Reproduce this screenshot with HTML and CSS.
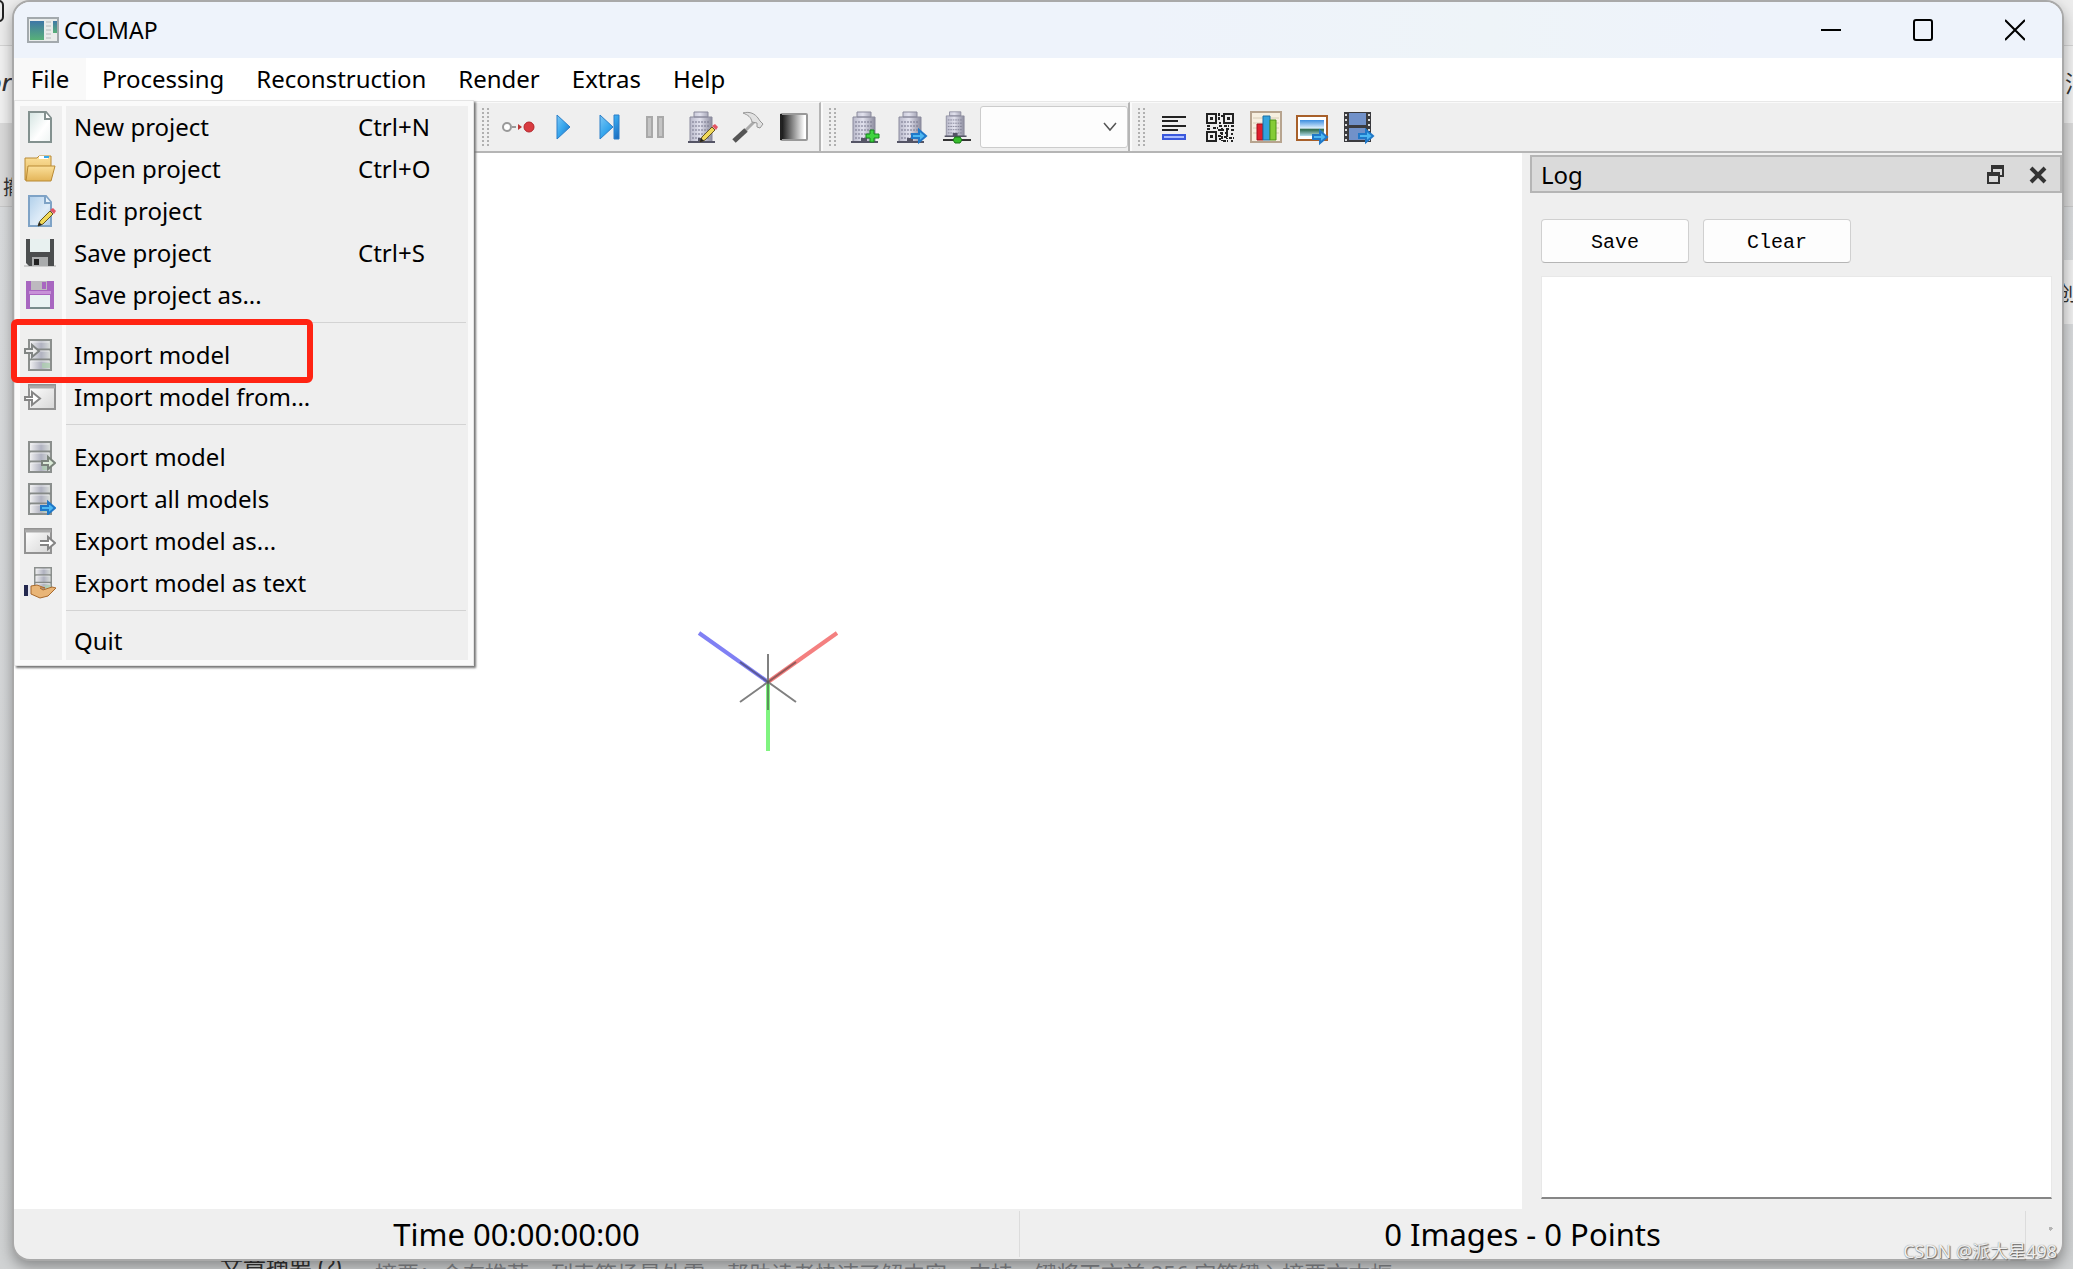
FILE: index.html
```html
<!DOCTYPE html>
<html lang="en">
<head>
<meta charset="utf-8">
<title>COLMAP</title>
<link rel="stylesheet" href="styles.css">
</head>
<body>
<svg class="defs" aria-hidden="true">
  <defs>
    <linearGradient id="paper" x1="0" y1="0" x2="1" y2="1"><stop offset="0" stop-color="#d3e4e1"/><stop offset=".6" stop-color="#fff"/><stop offset="1" stop-color="#edf3f2"/></linearGradient>
    <linearGradient id="bluepaper" x1="0" y1="0" x2="1" y2="1"><stop offset="0" stop-color="#b0cfea"/><stop offset=".6" stop-color="#dfecf8"/><stop offset="1" stop-color="#a9c8e6"/></linearGradient>
    <linearGradient id="gold" x1="0" y1="0" x2="0" y2="1"><stop offset="0" stop-color="#fbe09a"/><stop offset="1" stop-color="#e3b458"/></linearGradient>
    <linearGradient id="metal" x1="0" y1="0" x2="1" y2="0"><stop offset="0" stop-color="#f4f4f4"/><stop offset=".55" stop-color="#b0b2c0"/><stop offset="1" stop-color="#dde1dd"/></linearGradient>
    <linearGradient id="play" x1="0" y1="0" x2="1" y2="1"><stop offset="0" stop-color="#7cc7f5"/><stop offset=".5" stop-color="#35a5ec"/><stop offset="1" stop-color="#1a68bb"/></linearGradient>
    <linearGradient id="fade" x1="0" y1="0" x2="1" y2="0"><stop offset="0" stop-color="#111"/><stop offset=".9" stop-color="#fff"/></linearGradient>
    <linearGradient id="wall" x1="0" y1="0" x2="1" y2="0"><stop offset="0" stop-color="#b9b9ca"/><stop offset=".45" stop-color="#e2e2ee"/><stop offset="1" stop-color="#8c8c9e"/></linearGradient>
    <linearGradient id="pane" x1="0" y1="0" x2="1" y2="1"><stop offset="0" stop-color="#fff"/><stop offset="1" stop-color="#d6d6d6"/></linearGradient>
    <linearGradient id="sky" x1="0" y1="0" x2="0" y2="1"><stop offset="0" stop-color="#3b8de0"/><stop offset=".5" stop-color="#dceefb"/><stop offset=".6" stop-color="#2d6a4a"/><stop offset="1" stop-color="#b7dfee"/></linearGradient>
    <linearGradient id="screen" x1="0" y1="0" x2="0" y2="1"><stop offset="0" stop-color="#3e77a6"/><stop offset="1" stop-color="#58b078"/></linearGradient>
    <g id="arrow"><path d="M17 23h7v-4l7 6-7 6v-4h-7z" fill="#4db8f2" stroke="#1f78c8" stroke-width="2"/></g>
    <g id="pencil"><path d="M14 31l2-5 10-10 3 3-10 10z" fill="#f0d95a" stroke="#665520"/><path d="M26 15l3-2 3 3-2 3z" fill="#e25563"/><path d="M14 31l1-4 3 3z" fill="#222"/></g>
    <symbol id="server" viewBox="0 0 32 32"><path d="M5 1h22v30H5z" fill="url(#metal)" stroke="#8b8f8d" stroke-width="2"/><path d="M5 10.500h22M5 20.500h22" stroke="#858987" stroke-width="2"/><path d="M7 12h18M7 22h18M7 3h18" stroke="#fff" stroke-opacity=".6"/><path d="M18 24h8v5h-8z" fill="#aacdac" opacity=".7"/></symbol>
    <symbol id="building" viewBox="0 0 32 32"><path d="M8 1h14v5H8zM4 6h22v25H4z" fill="url(#wall)" stroke="#8a8a9c"/><path d="M6 11h18M6 15h18M6 19h18M6 23h18M6 27h18" stroke="#77778c" stroke-dasharray="2 1"/><path d="M2 31h27M13 28h4v3h-4z" stroke="#555566" fill="#555566" stroke-width="2"/></symbol>
  </defs>
</svg>

<div class="backdrop" aria-hidden="true">
  <div class="band band-tabs"></div>
  <div class="band band-header"></div>
  <div class="band band-tools"></div>
  <div class="band band-page"></div>
  <span class="peek peek-url">https://mp.csdn.net/mp_blog/creation/editor/128281403340</span>
  <span class="peek peek-tab"></span>
  <span class="peek peek-or">or</span>
  <span class="peek peek-undo">撤</span>
  <span class="peek peek-msg">消</span>
  <span class="peek peek-card"></span>
  <span class="peek peek-create">创</span>
  <span class="peek peek-label">文章摘要 (?)</span>
  <span class="peek peek-summary">摘要：会在推荐、列表等场景外露，帮助读者快速了解内容，支持一键将正文前 256 字符键入摘要文本框</span>
</div>

<div class="window">
  <header class="titlebar">
    <svg class="app-icon" viewBox="0 0 32 26"><path d="M1 1h30v24H1z" fill="#e9eceb" stroke="#a3a9ad" stroke-width="2"/><path d="M3 4h14v19H3z" fill="url(#screen)"/><path d="M26 4h4v12h-4z" fill="url(#screen)"/><path d="M19 5h5M19 9h5M19 13h5M19 17h5M19 21h5" stroke="#b6baba"/></svg>
    <h1>COLMAP</h1>
    <div class="window-buttons">
      <button type="button" aria-label="Minimize"><svg viewBox="0 0 20 22"><path d="M0 11h20" stroke="#000" stroke-width="2"/></svg></button>
      <button type="button" aria-label="Maximize"><svg viewBox="0 0 20 22"><rect x="1" y="1" width="18" height="20" rx="2" fill="none" stroke="#000" stroke-width="2"/></svg></button>
      <button type="button" aria-label="Close"><svg viewBox="0 0 20 22"><path d="M0 1l20 20M20 1L0 21" stroke="#000" stroke-width="2"/></svg></button>
    </div>
  </header>

  <nav class="menubar">
    <div class="menu-holder">
      <button type="button" class="open">File</button>
      <div class="menu">
        <button type="button"><svg viewBox="0 0 32 32"><path d="M5 1h17l5 6v24H5z" fill="url(#paper)" stroke="#83918f" stroke-width="2"/><path d="M21 1v7h6" fill="#fff" stroke="#83918f" stroke-width="2"/></svg><span>New project</span><kbd>Ctrl+N</kbd></button>
        <button type="button"><svg viewBox="0 0 32 32"><path d="M1 5h12l2-2h12v24H1z" fill="url(#gold)" stroke="#b98a35"/><path d="M15 3h9v3h-9z" fill="#fff"/><path d="M20 3h5v2h-5z" fill="#36a9ea"/><path d="M4 13h27l-4 15H2z" fill="url(#gold)" stroke="#b98a35"/></svg><span>Open project</span><kbd>Ctrl+O</kbd></button>
        <button type="button"><svg viewBox="0 0 32 32"><path d="M5 1h17l5 6v24H5z" fill="url(#bluepaper)" stroke="#7fa3c6" stroke-width="2"/><path d="M21 1v7h6" fill="#e9f3fb" stroke="#7fa3c6" stroke-width="2"/><use href="#pencil"/></svg><span>Edit project</span></button>
        <button type="button"><svg viewBox="0 0 32 32"><path d="M0 28h32v2H0z" fill="#ccc"/><path d="M2 2h28v27H5l-3-3z" fill="#4b4d4e"/><path d="M6 2h20v13H6z" fill="#e8f1f0"/><path d="M8 20h16v9H8z" fill="#aaacad"/><path d="M10 22h5v6h-5z" fill="#222"/></svg><span>Save project</span><kbd>Ctrl+S</kbd></button>
        <button type="button"><svg viewBox="0 0 32 32"><path d="M2 2h28v28H2z" fill="#a866c0"/><path d="M5 12h22v3H5z" fill="#c792d8"/><path d="M6 16h20v13H6z" fill="#e9f3f2"/><path d="M7 2h16v9H7z" fill="#bdb9bf"/><path d="M18 3h4v7h-4z" fill="#a866c0"/><path d="M6 29h20" stroke="#788c8b" stroke-width="2"/></svg><span>Save project as...</span></button>
        <hr>
        <button type="button"><svg viewBox="0 0 32 32"><use href="#server"/><path d="M1 10h7V6l7 6-7 6v-4H1z" fill="#eee" stroke="#818584" stroke-width="2"/></svg><span>Import model</span></button>
        <button type="button"><svg viewBox="0 0 32 32"><path d="M5 4h26v24H5z" fill="url(#pane)" stroke="#929292" stroke-width="2"/><path d="M5 6h26" stroke="#aaa" stroke-width="3"/><path d="M1 16h7v-5l8 6.500-8 6.500v-5H1z" fill="#fff" stroke="#858585" stroke-width="2"/></svg><span>Import model from...</span></button>
        <hr>
        <button type="button"><svg viewBox="0 0 32 32"><use href="#server"/><path d="M18 20h6v-4l7 6-7 6v-4h-6z" fill="#dcebd8" stroke="#7a837a" stroke-width="2"/></svg><span>Export model</span></button>
        <button type="button"><svg viewBox="0 0 32 32"><use href="#server"/><use href="#arrow"/></svg><span>Export all models</span></button>
        <button type="button"><svg viewBox="0 0 32 32"><path d="M1 4h26v24H1z" fill="url(#pane)" stroke="#929292" stroke-width="2"/><path d="M1 6h26" stroke="#aaa" stroke-width="3"/><path d="M16 16h8v-4l7 6-7 6v-4h-8" fill="#fff" stroke="#858585" stroke-width="2"/></svg><span>Export model as...</span></button>
        <button type="button"><svg viewBox="0 0 32 32"><use href="#server" x="7" y="0" width="24" height="24"/><path d="M0 18h4v11H0z" fill="#23284e"/><path d="M4 18h3v11H4z" fill="#e6e6ee"/><path d="M7 19l6-1 8 3h-5l3 2 9-3 4 1-8 8-8 2-9-4z" fill="#e9b577" stroke="#a8692c"/></svg><span>Export model as text</span></button>
        <hr>
        <button type="button" class="quit"><span>Quit</span></button>
        <div class="callout"></div>
      </div>
    </div>
    <button type="button">Processing</button>
    <button type="button">Reconstruction</button>
    <button type="button">Render</button>
    <button type="button">Extras</button>
    <button type="button">Help</button>
  </nav>

  <div class="toolbars">
    <div class="toolbar files"></div>
    <div class="toolbar run">
      <i class="grip"></i>
      <button type="button" aria-label="Automatic reconstruction"><svg viewBox="0 0 32 32"><circle cx="5" cy="16" r="4" fill="#fff" stroke="#999" stroke-width="2"/><path d="M10 16h4" stroke="#999" stroke-width="2"/><path d="M16 13l4 3-4 3z" fill="#b33"/><circle cx="27" cy="16" r="5" fill="#d93b40" stroke="#b3272c"/></svg></button>
      <button type="button" aria-label="Start"><svg viewBox="0 0 32 32"><path d="M9 4l13 12L9 28z" fill="url(#play)" stroke="#2b7fc9"/></svg></button>
      <button type="button" aria-label="Step"><svg viewBox="0 0 32 32"><path d="M6 4l13 12L6 28zM20 4h5v24h-5z" fill="url(#play)" stroke="#2b7fc9"/></svg></button>
      <button type="button" aria-label="Pause"><svg viewBox="0 0 32 32"><path d="M7 6h5v20H7zM18 6h5v20h-5z" fill="#c4c4c4" stroke="#a9a9a9" stroke-width="2"/></svg></button>
      <button type="button" aria-label="Reconstruction options"><svg viewBox="0 0 32 32"><use href="#building"/><use href="#pencil"/></svg></button>
      <button type="button" aria-label="Bundle adjustment"><svg viewBox="0 0 32 32"><path d="M3 30L22 11" stroke="#aaa" stroke-width="3"/><path d="M2 30L14 19" stroke="#555" stroke-width="5"/><path d="M11 2c7-2 12 1 15 5l2 3 3 3-3 4-3-1v-4l-5-1c-1-5-4-7-9-9z" fill="#e1e1e1" stroke="#969696"/></svg></button>
      <button type="button" aria-label="Color map"><svg viewBox="0 0 32 32"><rect x="3" y="3" width="26" height="26" rx="1" fill="url(#fade)" stroke="#999" stroke-width="2"/><path d="M3 3v26" stroke="#222" stroke-width="2"/></svg></button>
    </div>
    <div class="toolbar">
      <i class="grip"></i>
      <button type="button" aria-label="Add image"><svg viewBox="0 0 32 32"><use href="#building"/><path d="M21 19h4v4h5v4h-5v4h-4v-4h-4v-4h4z" fill="#3fd43f" stroke="#16861c"/></svg></button>
      <button type="button" aria-label="Export image"><svg viewBox="0 0 32 32"><use href="#building"/><use href="#arrow"/></svg></button>
      <button type="button" aria-label="Network"><svg viewBox="0 0 32 32"><use href="#building" x="2" y="0" width="26" height="26"/><path d="M2 29h28" stroke="#333" stroke-width="2"/><path d="M14 26h5l2 3-2 3h-5l-2-3z" fill="#38bd2d" stroke="#167315"/></svg></button>
      <select aria-label="Model"><option></option></select>
    </div>
    <div class="toolbar last">
      <i class="grip"></i>
      <button type="button" aria-label="Show log"><svg viewBox="0 0 32 32"><path d="M4 6h24M4 10h16M4 15h24M4 19h16" stroke="#222" stroke-width="2"/><path d="M5 24h22v4H5z" fill="#a9bcff" stroke="#3a58dc" stroke-width="2"/></svg></button>
      <button type="button" aria-label="Match matrix"><svg viewBox="0 0 32 32"><g fill="none" stroke="#222" stroke-width="2"><path d="M3 3h9v9H3zM20 3h9v9h-9zM3 21h9v9H3z"/><path d="M15 2v7M17 5h2M15 12h2M3 15h4M9 17h5M3 18h3M15 15h4M20 15h5M27 15h3M14 19h6M22 18h3M27 19h3M16 22h3M21 22h4M27 23h2M14 25h4M20 26h3M25 27h5M15 28h2M19 30h5M27 30h2M23 19v9M18 17v13" stroke-dasharray="3 1"/></g><path d="M6 6h3v3H6zM23 6h3v3h-3zM6 24h3v3H6z" fill="#222"/></svg></button>
      <button type="button" aria-label="Statistics"><svg viewBox="0 0 32 32"><path d="M1 1h30v30H1z" fill="#f7efdf" stroke="#b7a48f" stroke-width="2"/><path d="M3 7h26M3 12h26M3 17h26M3 22h26" stroke="#d8ccb6"/><path d="M7 13h6v16H7z" fill="#e01f2d" stroke="#a3101b"/><path d="M13 5h7v24h-7z" fill="#35a3dd" stroke="#1b6fa3"/><path d="M20 9h6v20h-6z" fill="#85cc35" stroke="#4d9316"/></svg></button>
      <button type="button" aria-label="Grab image"><svg viewBox="0 0 32 32"><path d="M1 5h30v24H1z" fill="#fff" stroke="#a8602a" stroke-width="2"/><path d="M4 9h24v16H4z" fill="url(#sky)"/><use href="#arrow" y="1"/></svg></button>
      <button type="button" aria-label="Grab movie"><svg viewBox="0 0 32 32"><path d="M2 1h27v30H2z" fill="#3b3b3f"/><path d="M7 2h17v12H7zM7 17h17v12H7z" fill="#7191c9"/><path d="M4 3v27M27 3v27" stroke="#ddd" stroke-width="2" stroke-dasharray="2 3"/><use href="#arrow"/></svg></button>
    </div>
  </div>

  <main class="workspace">
    <section class="viewport" aria-label="Model viewer">
      <svg class="axes" viewBox="0 0 140 120"><g fill="none"><path d="M70 61L1 12" stroke="#8080f4" stroke-width="4"/><path d="M70 61l69-49" stroke="#f48080" stroke-width="4"/><path d="M70 61v69" stroke="#80f480" stroke-width="4"/><path d="M70 33v28M42 81l28-20 28 20" stroke="#808080" stroke-width="2"/><path d="M42 41l28 20 28-20M70 61v28" stroke="#333" stroke-opacity=".5" stroke-width="2"/></g></svg>
    </section>
    <aside class="dock">
      <header class="dock-title"><h2>Log</h2>
        <button type="button" aria-label="Float"><svg viewBox="0 0 18 20"><path d="M5 7V2h11v9h-4M1 9h11v9H1z" fill="none" stroke="#333" stroke-width="2"/><path d="M4 2h13M0 9h13" stroke="#333" stroke-width="4"/></svg></button>
        <button type="button" aria-label="Close log"><svg viewBox="0 0 18 20"><path d="M2 3l14 14M16 3L2 17" stroke="#333" stroke-width="4"/></svg></button>
      </header>
      <div class="dock-body">
        <div class="dock-actions"><button type="button">Save</button><button type="button">Clear</button></div>
        <textarea aria-label="Log output" readonly></textarea>
      </div>
    </aside>
  </main>

  <footer class="statusbar"><span>Time 00:00:00:00</span><span>0 Images - 0 Points</span><i class="size-grip"></i></footer>
</div>
<div class="watermark">CSDN @派大星498</div>
</body>
</html>
```
FILE: styles.css
```css
* { box-sizing: border-box; }
body {
  margin: 0;
  min-height: 100vh;
  display: flex;
  position: relative;
  overflow: hidden;
  background: #d8dadb;
  color: #000;
  font: 24px/32px "Noto Sans", "Open Sans", "Noto Sans CJK SC", sans-serif;
}
button { font: inherit; color: inherit; background: none; border: 0; padding: 0; margin: 0; }
h1, h2 { margin: 0; font-weight: 400; }
.defs { position: absolute; width: 0; height: 0; }

/* Desktop content that shows around the window */
.backdrop { position: absolute; inset: 0; display: flex; flex-direction: column; overflow: hidden; }
.band-tabs { height: 46px; background: #ececec; border-bottom: 1px solid #d4d4d4; }
.band-header { height: 77px; background: #f0f0f0; }
.band-tools { height: 84px; background: #dadada; border-bottom: 1px solid #c8c8c8; }
.band-page { flex: 1; background: linear-gradient(#d9dbdd, #d0d2d3); }
.peek { position: absolute; white-space: nowrap; color: #333; }
.peek-url { left: 140px; top: -20px; font-size: 20px; line-height: 26px; }
.peek-tab { left: -20px; top: 0; width: 24px; height: 22px; border: 2px solid #222; border-radius: 5px; }
.peek-or { left: -12px; top: 66px; font-size: 24px; font-weight: 500; font-style: italic; }
.peek-undo { left: 3px; top: 172px; font-size: 20px; }
.peek-msg { left: 2065px; top: 67px; font-size: 23px; }
.peek-card { right: 0; top: 260px; width: 14px; height: 64px; background: #efefef; }
.peek-create { left: 2057px; top: 278px; font-size: 20px; }
.peek-label { left: 220px; bottom: -13px; font-size: 23px; }
.peek-summary { left: 375px; bottom: -20px; font-size: 22px; color: #84868a; }

.window {
  position: relative;
  flex: 1;
  display: flex;
  flex-direction: column;
  margin: 2px 11px 10px 14px;
  border-radius: 16px;
  background: #efefef;
  box-shadow: 0 0 0 2px #a9a9a9, 0 6px 14px 2px #00000055;
}

.titlebar {
  display: flex;
  align-items: center;
  height: 56px;
  padding-left: 13px;
  border-radius: 16px 16px 0 0;
  background: linear-gradient(90deg, #eef3fb 55%, #eef4f8 72%, #eef3fb 84%);
}
.app-icon { width: 32px; height: 26px; }
.titlebar h1 { flex: 1; padding-left: 5px; font-size: 23px; }
.window-buttons { display: flex; padding-right: 1px; }
.window-buttons button { display: grid; place-items: center; width: 92px; height: 56px; }
.window-buttons svg { width: 20px; height: 22px; }

.menubar { display: flex; height: 43px; background: #fff; }
.menubar > button, .menu-holder > .open { height: 42px; padding: 0 16px; }
.menu-holder > .open { width: 72px; background: #f9f9f9; }
.menu-holder { position: relative; }
.menu {
  position: absolute;
  z-index: 2;
  top: 42px;
  left: 0;
  width: 460px;
  padding: 5px;
  border: 1px solid #e4e4e4;
  background: linear-gradient(90deg, #efefef 42px, #fafafa 42px 46px, #efefef 46px) content-box, #fafafa;
  box-shadow: 2px 2px 2px #777;
}
.menu button {
  display: grid;
  grid-template-columns: 32px 1fr 110px;
  column-gap: 18px;
  align-items: center;
  width: 100%;
  height: 42px;
  padding-left: 4px;
  text-align: left;
}
.menu svg { width: 32px; height: 32px; }
.menu span { grid-column: 2; white-space: nowrap; }
.menu kbd { font: inherit; }
.menu .quit { height: 38px; }
.menu hr { height: 1px; margin: 6px 2px 11px 46px; border: 0; background: #d3d3d3; }
.callout {
  position: absolute;
  left: -4px;
  top: 218px;
  width: 302px;
  height: 64px;
  border: 6px solid #ff2413;
  border-radius: 6px;
}

.toolbars { display: flex; height: 52px; border-top: 1px solid #e8e8e8; border-bottom: 2px solid #b5b5b5; }
.toolbar { display: flex; align-items: center; padding-left: 6px; border-left: 2px solid #fafafa; border-top: 1px solid #fafafa; }
.toolbar:not(.last) { border-right: 2px solid #b5b5b5; }
.toolbar.files { width: 460px; border-right: 0; }
.toolbar.run { padding-right: 2px; }
.toolbar.last { flex: 1; }
.toolbar button { width: 46px; height: 46px; display: grid; place-items: center; }
.toolbar svg { width: 32px; height: 32px; overflow: visible; }
.grip { width: 7px; height: 38px; margin-right: 6px; background: radial-gradient(circle at 1px 1px, #b0b0b0 1px, transparent 1px) 0 0 / 5px 4px; }
.toolbar select {
  width: 148px;
  height: 42px;
  border: 1px solid #ccc;
  border-radius: 3px;
  appearance: none;
  background: #fdfdfd url("data:image/svg+xml,%3Csvg xmlns='http://www.w3.org/2000/svg' width='14' height='10'%3E%3Cpath d='M1 1l6 7 6-7' fill='none' stroke='%23555' stroke-width='1.500'/%3E%3C/svg%3E") no-repeat right 10px center;
}

.workspace { flex: 1; display: flex; }
.viewport { flex: 1; display: grid; place-items: center; background: #fff; }
.axes { width: 140px; height: 120px; overflow: visible; }
.dock { display: flex; flex-direction: column; width: 540px; padding-left: 8px; padding-top: 2px; }
.dock-title {
  display: flex;
  align-items: center;
  gap: 24px;
  height: 38px;
  padding: 2px 13px 0 9px;
  border: 2px solid #b5b5b5;
  background: #dadada;
}
.dock-title h2 { flex: 1; font-size: 24px; }
.dock-title button { display: grid; }
.dock-title svg { width: 18px; height: 20px; }
.dock-body { flex: 1; display: flex; flex-direction: column; gap: 13px; padding: 26px 10px 10px 11px; }
.dock-actions { display: flex; gap: 14px; }
.dock-actions button {
  width: 148px;
  height: 44px;
  padding-top: 4px;
  border: 1px solid #d0d0d0;
  border-bottom-color: #b5b5b5;
  border-radius: 4px;
  background: #fdfdfd;
  font: 20px/24px "Liberation Mono", monospace;
}
textarea { flex: 1; width: 100%; border: 1px solid #e8e8e8; border-bottom: 2px solid #868686; background: #fff; resize: none; outline: 0; }

.statusbar { display: flex; align-items: center; height: 50px; font-size: 31px; line-height: 46px; }
.statusbar span { flex: 1; text-align: center; border-right: 1px solid #dcdcdc; }
.size-grip { width: 36px; height: 18px; background: radial-gradient(circle, #b5b5b5 2px, transparent 2px) right 8px top 0 / 7px 7px no-repeat; }

.watermark {
  position: absolute;
  right: 16px;
  bottom: 6px;
  color: #eee;
  font-size: 18px;
  line-height: 24px;
  text-shadow: 1px 1px 1px #666, 0 0 1px #777;
}
```
